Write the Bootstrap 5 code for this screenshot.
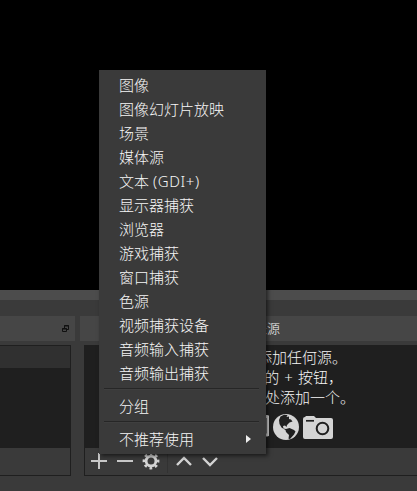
<!DOCTYPE html>
<html lang="zh-CN">
<head>
<meta charset="utf-8">
<meta name="viewport" content="width=device-width, initial-scale=1">
<title>来源</title>
<link href="https://cdn.jsdelivr.net/npm/bootstrap@5.3.0/dist/css/bootstrap.min.css" rel="stylesheet">
<style>
body{height:491px;background:#3a3a3a;color:#f6f6f6;font:300 15px/20px "Noto Sans","Noto Sans CJK SC",sans-serif}
.preview{height:290px;background:#000}
.splitter{height:10px;background:#4c4c4c}
.docks{padding-top:16px;gap:5px}
.dock-scenes{width:75px}
.dock-title{height:25px;background:#464646;margin-bottom:4px}
.dock-scenes .dock-title{padding-right:5px}
.dock-sources .dock-title{padding:0 0 2px 174px;font-size:13px}
.panel{height:131px;border:1px solid #1f1f1f}
.dock-scenes .panel{margin-right:4px;border-left:0}
.dock-sources .panel{margin-left:4px;border-right:0}
.panel-body{height:102px;background:#1f1f1f}
.scene-row{height:22px;background:#303030}
.hint{padding-top:1px}
.hint-a{margin-right:70px}.hint-b{margin-right:74px;word-spacing:1.2px}.hint-c{margin-right:62px}
.hint-icons{margin:7px 84px 0 0;gap:4px}
.tools{height:27px;padding:0 0 2px 5px}
.source-menu{left:99px;top:70px;width:167px;height:384px;background:#3a3a3a;padding:3px 0;box-shadow:2px 2px 4px rgba(0,0,0,.55)}
.source-menu .dropdown-item{height:24px;line-height:24px;padding:0 15px 0 20px;color:#f6f6f6;font-size:15px;font-weight:300}
.latin{letter-spacing:.65px}
.menu-sep{height:9px;padding:3px 7px 0 5px}
.menu-sep::before{content:"";display:block;height:2px;background:#262626;border-bottom:1px solid #3f3f3f}
svg{display:block;flex:none}
</style>
</head>
<body class="d-flex flex-column overflow-hidden position-relative">
<div class="preview flex-shrink-0"></div>
<div class="splitter flex-shrink-0"></div>
<main class="docks d-flex">
  <section class="dock-scenes flex-shrink-0">
    <div class="dock-title d-flex align-items-center justify-content-end">
      <svg width="8" height="8" viewBox="0 0 8 8" fill="none" stroke="#101010"><path d="M2.500 3V.5h4v4H5M2 1h5"/><path d="M.5 3.500h4v3h-4zM0 4h5"/></svg>
    </div>
    <div class="panel">
      <div class="panel-body"><div class="scene-row"></div></div>
      <div class="tools"></div>
    </div>
  </section>
  <section class="dock-sources flex-grow-1">
    <div class="dock-title d-flex align-items-center">来源</div>
    <div class="panel">
      <div class="panel-body hint text-end text-nowrap">
        <div class="hint-a">您还没有添加任何源。</div>
        <div class="hint-b">点击下面的 + 按钮，</div>
        <div class="hint-c">或者右击此处添加一个。</div>
        <div class="hint-icons d-flex justify-content-end align-items-center">
          <svg width="30" height="26" viewBox="0 0 30 26" fill="none" stroke="#d4d4d4" stroke-width="3"><rect x="1.500" y="2.500" width="27.500" height="18.500" rx="1"/></svg>
          <svg width="26" height="26" viewBox="0 0 26 26"><circle cx="13" cy="13" r="13" fill="#d4d4d4"/><path fill="#1f1f1f" d="M7.500 2.500 11 .8 14.500 1 13.500 3 16 2.500 16 5 18 5.500 19.500 7.500 16.500 8.500 14 11 13.500 13 12 11.500 10 12 10.500 14.500 13 15 16.500 14 21 16 22.500 17.500 21 20.500 17 25 15.500 24.800 16 21 13 18 12.500 16 8.500 13.500 6.500 10 6 6z"/></svg>
          <svg width="30" height="26" viewBox="0 0 30 26"><path fill="#d4d4d4" d="M0 5q0-2 2-2l1-1h8l2 2h15q2 0 2 2v17q0 2-2 2H2q-2 0-2-2z"/><path d="M3 6.800h8" stroke="#1f1f1f" stroke-width="1.700"/><circle cx="19.500" cy="14.500" r="5.800" fill="none" stroke="#1f1f1f" stroke-width="2"/></svg>
        </div>
      </div>
      <div class="tools d-flex align-items-center">
        <svg width="82" height="24" viewBox="0 -3 82 24" fill="none" stroke="#c8c8c8" stroke-width="2"><path d="M1 9h16M9 1v16M27 9h16"/><path stroke="#323232" stroke-width="1" d="M77.500-3v24"/><g stroke="#d4d4d4"><circle cx="61" cy="9" r="4.900" stroke-width="2.800"/><path stroke-width="2.800" stroke-dasharray="2.700 2.798" stroke-dashoffset="1.350" d="M61 2a7 7 0 1 1 0 14a7 7 0 1 1 0-14"/></g></svg>
        <svg width="52" height="24" viewBox="0 0 52 24" fill="none" stroke="#d4d4d4" stroke-width="2.400"><path d="M5 16l7-7 7 7M31 9l7 7 7-7"/></svg>
      </div>
    </div>
  </section>
</main>
<nav class="source-menu position-absolute">
  <a class="dropdown-item">图像</a>
  <a class="dropdown-item">图像幻灯片放映</a>
  <a class="dropdown-item">场景</a>
  <a class="dropdown-item">媒体源</a>
  <a class="dropdown-item">文本 <span class="latin">(GDI+)</span></a>
  <a class="dropdown-item">显示器捕获</a>
  <a class="dropdown-item">浏览器</a>
  <a class="dropdown-item">游戏捕获</a>
  <a class="dropdown-item">窗口捕获</a>
  <a class="dropdown-item">色源</a>
  <a class="dropdown-item">视频捕获设备</a>
  <a class="dropdown-item">音频输入捕获</a>
  <a class="dropdown-item">音频输出捕获</a>
  <div class="menu-sep"></div>
  <a class="dropdown-item">分组</a>
  <div class="menu-sep"></div>
  <a class="dropdown-item d-flex align-items-center justify-content-between">不推荐使用
    <svg width="5" height="8" viewBox="0 0 5 8"><path fill="#eee" d="M0 0l5 4-5 4z"/></svg>
  </a>
</nav>
<script src="https://cdn.jsdelivr.net/npm/bootstrap@5.3.0/dist/js/bootstrap.bundle.min.js"></script>
</body>
</html>
